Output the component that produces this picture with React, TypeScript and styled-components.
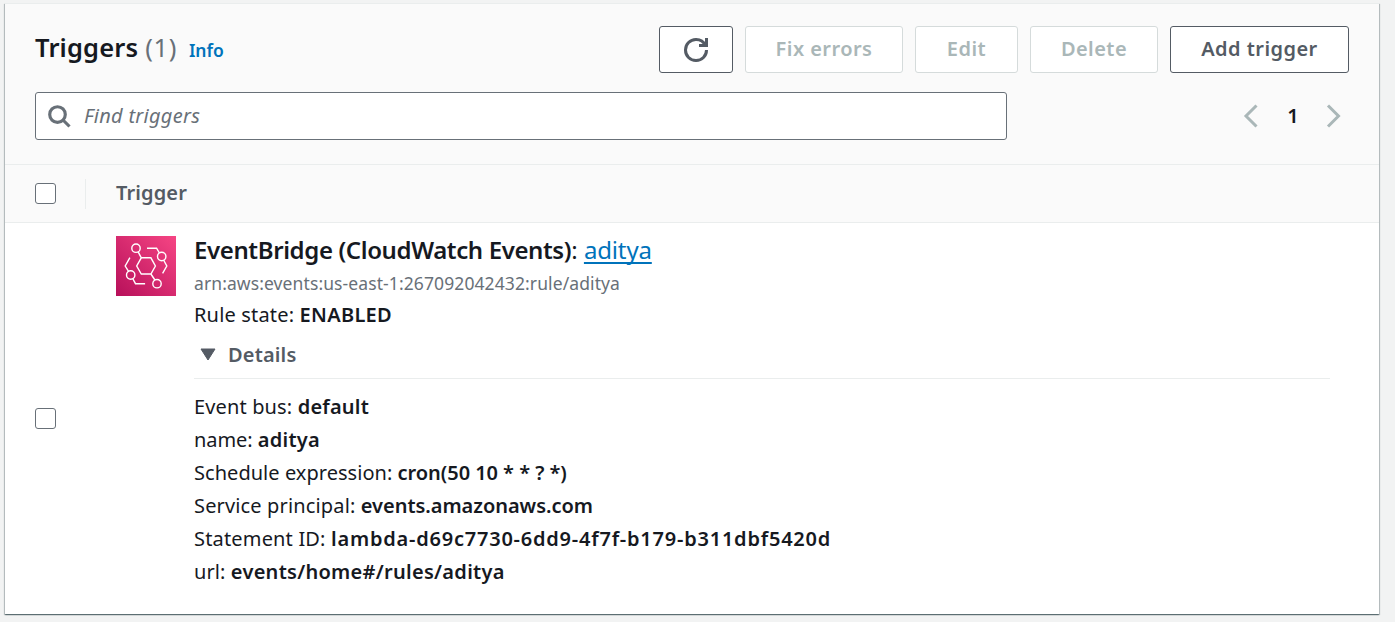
import React from 'react';
import styled, { createGlobalStyle } from 'styled-components';

const GlobalStyle = createGlobalStyle`
  * { box-sizing: border-box; }
  body {
    margin: 0;
    background: #f2f3f3;
    color: #16191f;
    font-family: "Noto Sans", "Open Sans", sans-serif;
    font-size: 20px;
    overflow: hidden;
  }
`;

const Page = styled.main`
  height: 622px;
  padding: 3px 16px 8px 5px;
`;

const Card = styled.section`
  height: 611px;
  background: #fff;
  border-top: 1px solid #eaeded;
  box-shadow: 0 1px 1px 0 rgba(0, 28, 36, 0.4), 1px 1px 1px 0 rgba(0, 28, 36, 0.2), -1px 1px 1px 0 rgba(0, 28, 36, 0.2);
`;

const CardHeader = styled.header`
  height: 160px;
  padding: 22px 30px 0;
  background: #fafafa;
`;

const TitleRow = styled.div`
  display: flex;
  align-items: flex-start;
  justify-content: space-between;
  height: 47px;
`;

const Title = styled.h2`
  display: flex;
  align-items: baseline;
  margin: 0;
  font-size: 25.5px;
  font-weight: 600;
  line-height: 42px;
`;

const Text = styled.span<{ $spacing?: number }>`
  letter-spacing: ${(p) => p.$spacing ?? 0}px;
  white-space: pre;
`;

const Count = styled(Text)`
  margin-left: 7px;
  color: #687078;
  font-weight: 400;
`;

const InfoLink = styled.a`
  margin-left: 12px;
  color: #0073bb;
  font-size: 17.5px;
  font-weight: 600;
`;

const Actions = styled.div`
  display: flex;
  gap: 12px;
`;

const Button = styled.button<{ $width: number }>`
  display: flex;
  align-items: center;
  justify-content: center;
  width: ${(p) => p.$width}px;
  height: 47px;
  padding: 0 0 2px;
  border: 1px solid #545b64;
  border-radius: 3px;
  background: #fff;
  color: #545b64;
  font: 600 20px "Noto Sans", sans-serif;
  letter-spacing: 0.45px;
  white-space: nowrap;

  &:disabled {
    border-color: #d5dbdb;
    color: #aab7b8;
  }
  svg { position: relative; top: 1px; }
`;

const FilterRow = styled.div`
  display: flex;
  align-items: center;
  justify-content: space-between;
  margin-top: 19px;
  height: 48px;
`;

const SearchBox = styled.label`
  display: flex;
  align-items: center;
  gap: 13px;
  width: 972px;
  height: 48px;
  padding: 0 11px;
  border: 1px solid #687078;
  border-radius: 3px;
  background: #fff;
`;

const SearchInput = styled.input`
  flex: 1;
  height: 40px;
  padding: 0 0 2px;
  border: 0;
  outline: 0;
  background: transparent;
  font: 400 20px "Noto Sans", sans-serif;

  &::placeholder {
    color: #687078;
    font-style: italic;
    letter-spacing: 0.27px;
    opacity: 1;
  }
`;

const Pagination = styled.nav`
  display: flex;
  align-items: center;
  justify-content: space-between;
  width: 106px;
  margin-right: 3px;
  font-weight: 600;
  line-height: 28px;
`;

const TableHead = styled.div`
  display: flex;
  align-items: center;
  height: 59px;
  padding-left: 30px;
  border-top: 1px solid #eaeded;
  border-bottom: 1px solid #eaeded;
  background: #fafafa;
  color: #545b64;
  font-weight: 600;
`;

const Checkbox = styled.input`
  appearance: none;
  flex: none;
  width: 21px;
  height: 21px;
  margin: 0;
  border: 1px solid #687078;
  border-radius: 3px;
  background: #fff;
`;

const ColumnTitle = styled.div`
  display: flex;
  align-items: center;
  height: 30px;
  margin-left: 29px;
  padding: 0 0 2px 30px;
  border-left: 1px solid #eaeded;
`;

const Row = styled.div`
  display: flex;
  align-items: center;
  height: 390px;
  padding: 0 49px 0 30px;
`;

const RowBody = styled.div`
  display: flex;
  flex: 1;
  align-self: stretch;
  gap: 18px;
  margin-left: 60px;
  padding-top: 13px;
`;

const Content = styled.div`
  flex: 1;
`;

const TriggerName = styled.div`
  margin-bottom: 4px;
  font-size: 24px;
  line-height: 28px;
`;

const Strong = styled.b<{ $spacing?: number }>`
  font-weight: 600;
  letter-spacing: ${(p) => p.$spacing ?? 0}px;
`;

const RuleLink = styled.a`
  color: #0073bb;
  letter-spacing: -0.15px;
  text-decoration: underline;
  text-decoration-thickness: 2px;
  text-underline-offset: 3px;
  text-decoration-skip-ink: none;
`;

const Arn = styled.div`
  color: #687078;
  font-size: 17.5px;
  line-height: 30px;
`;

const Line = styled.div`
  line-height: 33px;
  white-space: nowrap;
`;

const DetailsToggle = styled.div`
  display: flex;
  align-items: center;
  gap: 12px;
  height: 48px;
  padding-left: 6px;
  border-bottom: 1px solid #eaeded;
  color: #545b64;
  font-weight: 600;
`;

const DetailList = styled.div`
  padding-top: 11px;
`;

const RefreshIcon = () => (
  <svg width="24" height="24" viewBox="0 0 16 16" fill="none" stroke="#545b64" strokeWidth="2">
    <path d="M10 5h5V0" />
    <path d="M15 8a6.957 6.957 0 0 1-7 7 6.957 6.957 0 0 1-7-7 6.957 6.957 0 0 1 7-7 6.87 6.87 0 0 1 6.3 4" />
  </svg>
);

const SearchIcon = () => (
  <svg width="24" height="24" viewBox="0 0 16 16" fill="none" stroke="#687078" strokeWidth="2.1">
    <circle cx="7" cy="7" r="5.2" />
    <path d="m15 15-4.5-4.5" />
  </svg>
);

const Chevron = ({ d }: { d: string }) => (
  <svg width="24" height="24" viewBox="0 0 16 16" fill="none" stroke="#aab7b8" strokeWidth="2">
    <path d={d} />
  </svg>
);

const Caret = () => (
  <svg width="16" height="13" viewBox="0 0 16 13">
    <path d="M1 1h14L8 12z" fill="#545b64" stroke="#545b64" strokeLinejoin="round" />
  </svg>
);

const EventBridgeIcon = () => (
  <svg width="60" height="60" viewBox="0 0 60 60">
    <defs>
      <linearGradient id="eb" x1="0" y1="1" x2="1" y2="0">
        <stop offset="0" stopColor="#b7105a" />
        <stop offset="1" stopColor="#f64584" />
      </linearGradient>
    </defs>
    <path d="M0 0h60v60H0z" fill="url(#eb)" />
    <g fill="none" stroke="#fff" strokeWidth="1.4">
      <path d="M25.3 21.8h9.6l4.5 8.2-4.5 8h-9.6l-4.6-8zM22 15.7l3.3 6.1M34.9 38l4 6" />
      <path d="M31 12.2h9.6l2.8 4.8M47.6 24l3.2 6-4.2 7.3" />
      <path d="M13.9 21.7 9.2 30l3.2 5.2M16.7 42.5l2.8 5.2h9.6" />
      <circle cx="20" cy="12.2" r="4.2" />
      <circle cx="45.7" cy="20.5" r="4.2" />
      <circle cx="14.7" cy="39" r="4.2" />
      <circle cx="41" cy="47.7" r="4.2" />
    </g>
  </svg>
);

const details = [
  { label: 'Event bus:', value: 'default', labelSpacing: 0.14, valueSpacing: 0.2 },
  { label: 'name:', value: 'aditya', labelSpacing: -0.08, valueSpacing: 0.3 },
  { label: 'Schedule expression:', value: 'cron(50 10 * * ? *)', labelSpacing: 0.04, valueSpacing: -0.05 },
  { label: 'Service principal:', value: 'events.amazonaws.com', labelSpacing: 0.15, valueSpacing: -0.04 },
  { label: 'Statement ID:', value: 'lambda-d69c7730-6dd9-4f7f-b179-b311dbf5420d', labelSpacing: 0.17, valueSpacing: 0.78 },
  { label: 'url:', value: 'events/home#/rules/aditya', labelSpacing: 0.1, valueSpacing: 0.28 },
];

export default function App() {
  return (
    <Page>
      <GlobalStyle />
      <Card>
        <CardHeader>
          <TitleRow>
            <Title>
              <Text $spacing={0.15}>Triggers</Text>
              <Count $spacing={0.6}>(1)</Count>
              <InfoLink>Info</InfoLink>
            </Title>
            <Actions>
              <Button $width={74} aria-label="Refresh"><RefreshIcon /></Button>
              <Button $width={158} disabled>Fix errors</Button>
              <Button $width={103} disabled>Edit</Button>
              <Button $width={128} disabled>Delete</Button>
              <Button $width={179}>Add trigger</Button>
            </Actions>
          </TitleRow>
          <FilterRow>
            <SearchBox>
              <SearchIcon />
              <SearchInput placeholder="Find triggers" />
            </SearchBox>
            <Pagination>
              <Chevron d="M11 1 4 8l7 7" />
              <Text>1</Text>
              <Chevron d="m4 1 7 7-7 7" />
            </Pagination>
          </FilterRow>
        </CardHeader>
        <TableHead>
          <Checkbox type="checkbox" />
          <ColumnTitle><Text $spacing={0.12}>Trigger</Text></ColumnTitle>
        </TableHead>
        <Row>
          <Checkbox type="checkbox" />
          <RowBody>
            <EventBridgeIcon />
            <Content>
              <TriggerName>
                <Strong $spacing={-0.38}>EventBridge (CloudWatch Events)</Strong>: <RuleLink>aditya</RuleLink>
              </TriggerName>
              <Arn><Text $spacing={0.1}>arn:aws:events:us-east-1:267092042432:rule/aditya</Text></Arn>
              <Line><Text $spacing={0.17}>Rule state: </Text><Strong $spacing={0.3}>ENABLED</Strong></Line>
              <DetailsToggle><Caret /><Text $spacing={0.15}>Details</Text></DetailsToggle>
              <DetailList>
                {details.map((d) => (
                  <Line key={d.label}>
                    <Text $spacing={d.labelSpacing}>{d.label + ' '}</Text>
                    <Strong $spacing={d.valueSpacing}>{d.value}</Strong>
                  </Line>
                ))}
              </DetailList>
            </Content>
          </RowBody>
        </Row>
      </Card>
    </Page>
  );
}
